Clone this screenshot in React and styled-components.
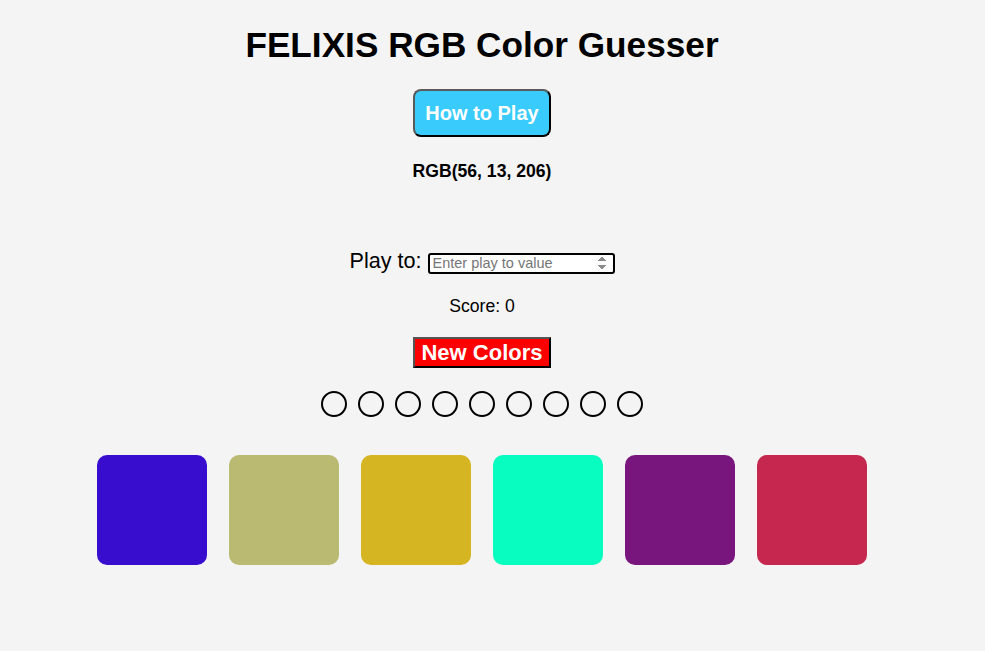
import React from "react";
import styled, { createGlobalStyle } from "styled-components";

const Global = createGlobalStyle`
  html, body { margin: 0; padding: 0; background: #f4f4f4; }
  body { font-family: "Liberation Sans", Arial, sans-serif; color: #000; }
`;

const Page = styled.div`
  width: 964px;
  display: flex;
  flex-direction: column;
  align-items: center;
  padding-top: 25px;
`;

const Title = styled.h1`
  margin: 0;
  font-size: 35.2px;
  line-height: 40px;
  font-weight: bold;
`;

const HelpButton = styled.button`
  margin-top: 24px;
  height: 48px;
  padding: 0 10px;
  background: #38cbfb;
  color: #fff;
  font-family: "Liberation Sans", Arial, sans-serif;
  font-weight: bold;
  font-size: 20px;
  border: 2px solid;
  border-color: #5a5a5a #000 #000 #5a5a5a;
  border-radius: 8px;
  cursor: pointer;
`;

const RgbText = styled.div`
  margin-top: 24px;
  font-size: 17.6px;
  line-height: 20px;
  font-weight: bold;
`;

const PlayRow = styled.div`
  margin-top: 68px;
  display: flex;
  align-items: center;
  gap: 6px;
  height: 28px;
`;

const PlayLabel = styled.label`
  font-size: 21.6px;
  line-height: 25px;
  padding-bottom: 5px;
`;

const PlayInput = styled.input`
  box-sizing: border-box;
  width: 187px;
  height: 21px;
  border: 2px solid #000;
  border-radius: 3px;
  background: #fff;
  padding: 0 3px;
  font-family: "Liberation Sans", Arial, sans-serif;
  font-size: 14.5px;
  &::placeholder { color: #767676; }
  &::-webkit-inner-spin-button { opacity: 1; }
`;

const Score = styled.div`
  margin-top: 19px;
  font-size: 17.6px;
  line-height: 20px;
`;

const NewButton = styled.button`
  margin-top: 21px;
  height: 31px;
  padding: 0 6px;
  background: #ff0000;
  color: #fff;
  font-family: "Liberation Sans", Arial, sans-serif;
  font-weight: bold;
  font-size: 22px;
  line-height: 25px;
  border: 2px solid;
  border-color: #555 #000 #000 #555;
  border-radius: 0;
  cursor: pointer;
`;

const Dots = styled.div`
  margin-top: 23px;
  display: flex;
  gap: 11px;
`;

const Dot = styled.div`
  box-sizing: border-box;
  width: 26px;
  height: 26px;
  border: 2px solid #000;
  border-radius: 50%;
  background: ${(p) => (p.$filled ? "#000" : "transparent")};
`;

const Tiles = styled.div`
  margin-top: 38px;
  display: flex;
  gap: 22px;
`;

const Tile = styled.div`
  width: 110px;
  height: 110px;
  border-radius: 10px;
  background: ${(p) => p.$color};
  cursor: pointer;
`;

const colors = [
  "rgb(56, 13, 206)",
  "#bbba73",
  "#d5b522",
  "#08fdc0",
  "#79167e",
  "#c5274e",
];

export default function App() {
  return (
    <>
      <Global />
      <Page>
        <Title>FELIXIS RGB Color Guesser</Title>
        <HelpButton>How to Play</HelpButton>
        <RgbText>RGB(56, 13, 206)</RgbText>
        <PlayRow>
          <PlayLabel htmlFor="playto">Play to:</PlayLabel>
          <PlayInput id="playto" type="number" placeholder="Enter play to value" />
        </PlayRow>
        <Score>Score: 0</Score>
        <NewButton>New Colors</NewButton>
        <Dots>
          {Array.from({ length: 9 }).map((_, i) => (
            <Dot key={i} />
          ))}
        </Dots>
        <Tiles>
          {colors.map((c) => (
            <Tile key={c} $color={c} />
          ))}
        </Tiles>
      </Page>
    </>
  );
}
